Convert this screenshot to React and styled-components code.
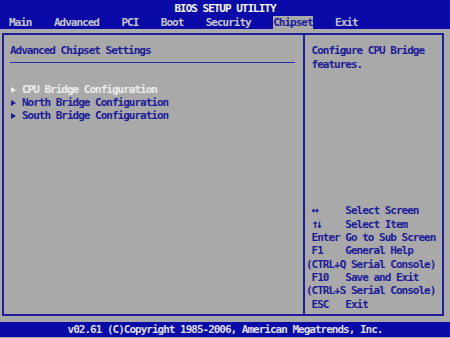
import { styled, createGlobalStyle } from "styled-components";

const GlobalStyle = createGlobalStyle`
    html, body {
        margin: 0;
        padding: 0;
        background-color: #a9a9a9;
    }
`;

const tabs = ["Main", "Advanced", "PCI", "Boot", "Security", "Chipset", "Exit"];

const menuItems = [
    { label: "CPU Bridge Configuration", selected: true },
    { label: "North Bridge Configuration" },
    { label: "South Bridge Configuration" },
];

const helpLines = [
    { key: "↔", text: "Select Screen", symbol: true },
    { key: "↑↓", text: "Select Item", symbol: true },
    { key: "Enter", text: "Go to Sub Screen" },
    { key: "F1", text: "General Help" },
    { full: "(CTRL+Q Serial Console)" },
    { key: "F10", text: "Save and Exit" },
    { full: "(CTRL+S Serial Console)" },
    { key: "ESC", text: "Exit" },
];

const App = () => {
    return (
        <Screen>
            <GlobalStyle />

            <TopBar>
                <Title>BIOS SETUP UTILITY</Title>
                <Tabs>
                    {tabs.map((t) => (
                        <Tab key={t} $active={t === "Chipset"}>{t}</Tab>
                    ))}
                </Tabs>
            </TopBar>

            <Panel>
                <MainColumn>
                    <Heading>Advanced Chipset Settings</Heading>
                    <Rule />
                    <Menu>
                        {menuItems.map((item) => (
                            <MenuItem key={item.label} $selected={item.selected}>
                                <Arrow />
                                {item.label}
                            </MenuItem>
                        ))}
                    </Menu>
                </MainColumn>

                <SideColumn>
                    <Description>
                        <Line>Configure CPU Bridge</Line>
                        <Line>features.</Line>
                    </Description>

                    <Help>
                        {helpLines.map((h, i) =>
                            h.full ? (
                                <HelpRow key={i}>{h.full}</HelpRow>
                            ) : (
                                <HelpRow key={i} $indent>
                                    <Key $symbol={h.symbol}>{h.key}</Key>
                                    {h.text}
                                </HelpRow>
                            )
                        )}
                    </Help>
                </SideColumn>
            </Panel>

            <Footer>v02.61 (C)Copyright 1985-2006, American Megatrends, Inc.</Footer>
        </Screen>
    )
};

const CHAR = 5.62;
const BLUE = "#0a0aa8";
const INK = "#1c1c98";

const Screen = styled.div`
    width: 450px;
    height: 338px;
    display: flex;
    flex-direction: column;
    background-color: #a9a9a9;
    font-family: "DejaVu Sans Mono", "Liberation Mono", monospace;
    font-size: 11px;
    font-weight: bold;
    letter-spacing: -1px;
    line-height: 13px;
    white-space: pre;
    overflow: hidden;
`;

const TopBar = styled.div`
    height: 29px;
    background-color: ${BLUE};
    display: flex;
    flex-direction: column;
`;

const Title = styled.div`
    height: 16px;
    line-height: 17px;
    text-align: center;
    color: #f4f4f4;
`;

const Tabs = styled.div`
    height: 13px;
    display: flex;
    gap: ${CHAR * 4}px;
    padding-left: 9px;
`;

const Tab = styled.span`
    color: ${(p) => (p.$active ? INK : "#c4c4cc")};
    background-color: ${(p) => (p.$active ? "#a9a9a9" : "transparent")};
`;

const Panel = styled.div`
    height: 279px;
    margin: 4px 6px 0 2px;
    border: 2px solid #1e1e9c;
    display: flex;
`;

const MainColumn = styled.div`
    width: 301px;
    border-right: 2px solid #1e1e9c;
    padding: 9px 8px 0 6px;
    box-sizing: border-box;
`;

const Heading = styled.div`
    color: ${INK};
`;

const Rule = styled.div`
    height: 1px;
    margin-top: 5px;
    background-color: #2a2aa6;
`;

const Menu = styled.div`
    margin-top: 20px;
`;

const MenuItem = styled.div`
    display: flex;
    align-items: center;
    color: ${(p) => (p.$selected ? "#ececec" : INK)};
`;

const Arrow = styled.span`
    width: 0;
    height: 0;
    margin: 0 6px 0 1px;
    border-top: 3.5px solid transparent;
    border-bottom: 3.5px solid transparent;
    border-left: 5px solid currentColor;
`;

const SideColumn = styled.div`
    flex: 1;
    display: flex;
    flex-direction: column;
    justify-content: space-between;
    padding: 9px 0 3px 1px;
    color: ${INK};
`;

const Description = styled.div`
    padding-left: ${CHAR}px;
`;

const Line = styled.div`
    line-height: 14px;
`;

const Help = styled.div`
    display: flex;
    flex-direction: column;
`;

const HelpRow = styled.div`
    height: 13.33px;
    line-height: 13.33px;
    padding-left: ${(p) => (p.$indent ? CHAR : 0)}px;
`;

const Key = styled.span`
    display: inline-block;
    vertical-align: top;
    width: ${CHAR * 6}px;
    font-size: ${(p) => (p.$symbol ? "12px" : "inherit")};
    letter-spacing: ${(p) => (p.$symbol ? "-3px" : "inherit")};
`;

const Footer = styled.div`
    height: 15px;
    margin-top: 6px;
    background-color: ${BLUE};
    color: #dcdce4;
    text-align: center;
    line-height: 16px;
`;

export default App;
